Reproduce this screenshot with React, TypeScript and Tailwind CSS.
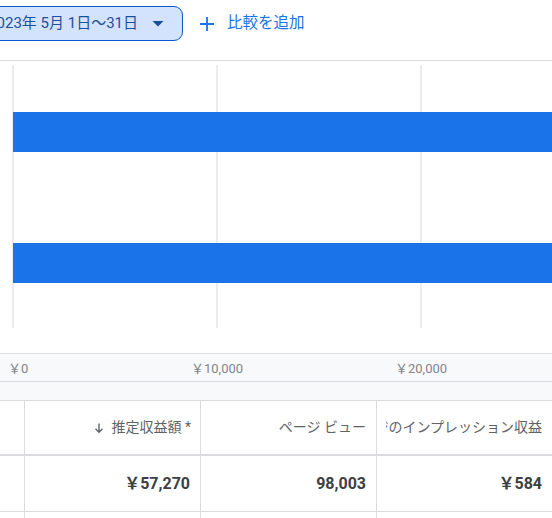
import React from "react";

const font = { fontFamily: 'Roboto, "Noto Sans CJK JP", sans-serif' };

const gridX = [13, 217, 421];
const bars = [51, 182];

function Chart() {
  return (
    <svg width="552" height="292" className="block">
      {gridX.map((x) => (
        <rect key={x} x={x - 1} y={4} width={2} height={263} fill="#ececec" />
      ))}
      {bars.map((y) => (
        <rect key={y} x={13} y={y} width={600} height={40} fill="#1a73e8" />
      ))}
    </svg>
  );
}

function SortArrow() {
  return (
    <svg width="12" height="12" viewBox="0 0 12 12" className="mr-[6px]">
      <path d="M6 1.5v8.5M2.5 6.8L6 10.3l3.5-3.5" stroke="#5f6368" strokeWidth="1.4" fill="none" />
    </svg>
  );
}

export default function App() {
  return (
    <div className="w-[552px] h-[518px] overflow-hidden bg-white" style={font}>
      {/* toolbar */}
      <div className="h-[61px] border-b border-[#dadce0] flex items-start">
        <div className="shrink-0 mt-[6px] -ml-[29px] w-[212px] h-[35px] flex items-center justify-end pr-[18px] rounded-[9px] border border-[#0b57d0] bg-[#d3e3fd] text-[#1b4f9c] text-[15px] whitespace-nowrap overflow-hidden">
          <span>2023年 5月 1日〜31日</span>
          <svg width="12" height="6" viewBox="0 0 12 6" className="ml-[14px] shrink-0">
            <path d="M0.5 0h11L6 5.5z" fill="#1b4f9c" />
          </svg>
        </div>
        <div className="mt-[6px] h-[35px] flex items-center ml-[17px] text-[#1a73e8]">
          <svg width="14" height="14" viewBox="0 0 14 14" className="mr-[13px]">
            <path d="M7 0v14M0 7h14" stroke="#1a73e8" strokeWidth="1.8" />
          </svg>
          <span className="text-[15.5px]">比較を追加</span>
        </div>
      </div>

      <Chart />

      {/* axis */}
      <div className="relative h-[29px] border-y border-[#dadce0] bg-[#f8f9fa] text-[13px] text-[#80868b]">
        <span className="absolute left-[8px] top-[5px]">￥0</span>
        <span className="absolute left-[191px] top-[5px]">￥10,000</span>
        <span className="absolute left-[395px] top-[5px]">￥20,000</span>
      </div>
      <div className="h-[19px] border-b border-[#dadce0] bg-[#f8f9fa]" />

      {/* table */}
      <div className="grid grid-cols-[25px_176px_176px_1fr] h-[55px] border-b-2 border-[#dadce0] text-[14px] text-[#5f6368]">
        <div className="border-r border-[#dadce0]" />
        <div className="border-r border-[#dadce0] flex items-center justify-end pr-[9px] whitespace-nowrap">
          <SortArrow />
          <span>推定収益額 *</span>
        </div>
        <div className="border-r border-[#dadce0] flex items-center justify-end pr-[10px] whitespace-nowrap">
          ページ ビュー
        </div>
        <div className="pl-[9px] pr-[10px] flex items-center min-w-0">
          <div className="flex-1 overflow-hidden flex justify-end whitespace-nowrap">
            <span className="shrink-0">ページのインプレッション収益</span>
          </div>
        </div>
      </div>
      <div className="grid grid-cols-[25px_176px_176px_1fr] h-[56px] border-b border-[#dadce0] text-[16px] font-bold text-[#3c4043]">
        <div className="border-r border-[#dadce0]" />
        <div className="border-r border-[#dadce0] flex items-center justify-end pr-[10px]">￥57,270</div>
        <div className="border-r border-[#dadce0] flex items-center justify-end pr-[10px]">98,003</div>
        <div className="flex items-center justify-end pr-[10px]">￥584</div>
      </div>
      <div className="grid grid-cols-[25px_176px_176px_1fr] h-[20px]">
        <div className="border-r border-[#dadce0]" />
        <div className="border-r border-[#dadce0]" />
        <div className="border-r border-[#dadce0]" />
        <div />
      </div>
    </div>
  );
}
